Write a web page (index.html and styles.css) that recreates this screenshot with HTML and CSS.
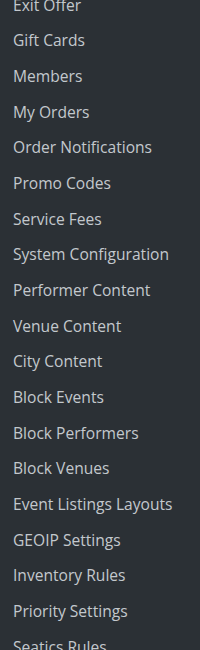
FILE: index.html
```html
<!DOCTYPE html>
<html lang="en">
<head>
  <meta charset="UTF-8">
  <meta name="viewport" content="width=device-width, initial-scale=1.0">
  <title>menu</title>
  <link rel="stylesheet" href="styles.css">
</head>
<body>

<nav class="sidebar">
  <ul class="nav-list">
    <li><a class="nav-link" href="#">Exit Offer</a></li>
    <li><a class="nav-link" href="#">Gift Cards</a></li>
    <li><a class="nav-link" href="#">Members</a></li>
    <li><a class="nav-link" href="#">My Orders</a></li>
    <li><a class="nav-link" href="#">Order Notifications</a></li>
    <li><a class="nav-link" href="#">Promo Codes</a></li>
    <li><a class="nav-link" href="#">Service Fees</a></li>
    <li><a class="nav-link" href="#">System Configuration</a></li>
    <li><a class="nav-link" href="#">Performer Content</a></li>
    <li><a class="nav-link" href="#">Venue Content</a></li>
    <li><a class="nav-link" href="#">City Content</a></li>
    <li><a class="nav-link" href="#">Block Events</a></li>
    <li><a class="nav-link" href="#">Block Performers</a></li>
    <li><a class="nav-link" href="#">Block Venues</a></li>
    <li><a class="nav-link" href="#">Event Listings Layouts</a></li>
    <li><a class="nav-link" href="#">GEOIP Settings</a></li>
    <li><a class="nav-link" href="#">Inventory Rules</a></li>
    <li><a class="nav-link" href="#">Priority Settings</a></li>
    <li><a class="nav-link" href="#">Seatics Rules</a></li>
  </ul>
</nav>

</body>
</html>
```

FILE: styles.css
```css
html, body {
  margin: 0;
  padding: 0;
  background-color: #2b3035;
  height: 100%;
  overflow: hidden;
}

body {
  font-family: "Open Sans", "Noto Sans", sans-serif;
}

.sidebar {
  width: 200px;
}

.nav-list {
  list-style: none;
  margin: -13px 0 0 0;
  padding: 0;
}

.nav-link {
  display: flex;
  align-items: center;
  height: 35.67px;
  padding-left: 13px;
  color: #c3c8cd;
  text-decoration: none;
  font-size: 15.6px;
  white-space: nowrap;
}
```
